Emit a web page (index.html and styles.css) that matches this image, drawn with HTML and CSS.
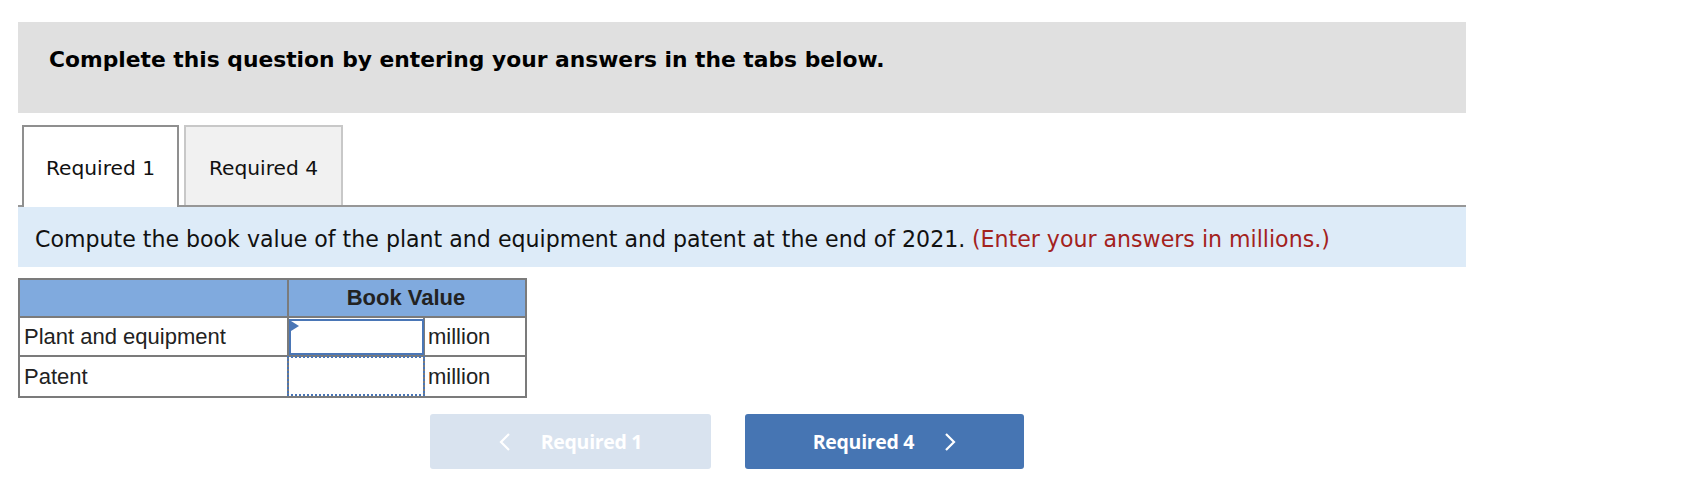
FILE: index.html
```html
<!DOCTYPE html>
<html>
<head>
<meta charset="utf-8">
<link rel="stylesheet" href="styles.css">
</head>
<body>
<div class="page">
  <div class="banner">Complete this question by entering your answers in the tabs below.</div>
  <div class="tabs">
    <div class="tab tab-active">Required 1</div>
    <div class="tab tab-idle">Required 4</div>
  </div>
  <div class="instruction">Compute the book value of the plant and equipment and patent at the end of 2021. <span class="note">(Enter your answers in millions.)</span></div>
  <table class="grid">
    <colgroup>
      <col class="w-label">
      <col class="w-input">
      <col class="w-unit">
    </colgroup>
    <thead>
      <tr>
        <th class="c-label"></th>
        <th class="c-head" colspan="2">Book Value</th>
      </tr>
    </thead>
    <tbody>
      <tr>
        <td class="c-label">Plant and equipment</td>
        <td class="c-input"><div class="field field-active"><span class="flag"></span></div></td>
        <td class="c-unit">million</td>
      </tr>
      <tr>
        <td class="c-label">Patent</td>
        <td class="c-input"><div class="field field-dotted"></div></td>
        <td class="c-unit">million</td>
      </tr>
    </tbody>
  </table>
  <div class="nav">
    <div class="btn btn-disabled">
      <svg class="chev" width="12" height="20" viewBox="0 0 12 20"><path d="M10 2 L2 10 L10 18" fill="none" stroke="#fff" stroke-width="2.2"/></svg>
      <span>Required 1</span>
    </div>
    <div class="btn btn-primary">
      <span>Required 4</span>
      <svg class="chev" width="12" height="20" viewBox="0 0 12 20"><path d="M2 2 L10 10 L2 18" fill="none" stroke="#fff" stroke-width="2.2"/></svg>
    </div>
  </div>
</div>
</body>
</html>
```

FILE: styles.css
```css
html, body {
  margin: 0;
  padding: 0;
  background: #ffffff;
}
.page {
  padding: 22px 0 0 18px;
  width: 1448px;
  font-family: "DejaVu Sans", Verdana, sans-serif;
}
.banner {
  box-sizing: border-box;
  height: 91px;
  background: #e0e0e0;
  padding: 25px 0 0 31px;
  font-weight: bold;
  font-size: 21.8px;
  color: #000;
}
.tabs {
  margin-top: 12px;
  display: flex;
  gap: 5px;
  padding-left: 4px;
  border-bottom: 2px solid #979797;
  height: 80px;
}
.tab {
  box-sizing: border-box;
  height: 82px;
  display: flex;
  align-items: center;
  justify-content: center;
  font-size: 20.2px;
  color: #111;
  padding-top: 2px;
}
.tab-active {
  width: 157px;
  background: #fff;
  border: 2px solid #8f8f8f;
  border-bottom: none;
  position: relative;
  z-index: 1;
}
.tab-idle {
  width: 159px;
  height: 80px;
  background: #f1f1f1;
  border: 2px solid #c8c8c8;
  border-bottom: none;
  padding-top: 4px;
}
.instruction {
  box-sizing: border-box;
  height: 60px;
  background: #ddebf8;
  display: flex;
  align-items: center;
  padding: 3px 0 0 17px;
  font-size: 22.1px;
  color: #111;
}
.note {
  color: #a3221d;
  margin-left: 0.3em;
}
.grid {
  margin-top: 11px;
  border-collapse: collapse;
  table-layout: fixed;
  width: 507px;
  font-family: "Liberation Sans", Arial, sans-serif;
  font-size: 22px;
  color: #222;
  border: 2px solid #7b7b7b;
}
.w-label { width: 269px; }
.w-input { width: 136px; }
.w-unit { width: 102px; }
.grid th, .grid td {
  border: 2px solid #7b7b7b;
  padding: 0;
  white-space: nowrap;
}
.grid thead tr {
  height: 38px;
  background: #80aade;
}
.grid tbody tr {
  height: 39px;
}
.c-label {
  padding-left: 4px !important;
  text-align: left;
}
.c-head {
  font-weight: bold;
  text-align: center;
  padding-right: 2px !important;
}
.c-input {
  position: relative;
}
.c-unit {
  padding-left: 3px !important;
}
.field {
  box-sizing: border-box;
  position: relative;
}
.field-active {
  border: 2px solid #4a76b6;
  height: 36px;
  width: 135px;
  margin: 1px 0 0 0;
}
.field-dotted {
  border: 2px dotted #4a76b6;
  margin: -1px 0 0 -2px;
  width: 138px;
  height: 40px;
}
.flag {
  position: absolute;
  left: 0;
  top: 0;
  width: 0;
  height: 0;
  border-top: 5px solid transparent;
  border-bottom: 5px solid transparent;
  border-left: 8px solid #4a76b6;
}
.nav {
  display: flex;
  gap: 34px;
  margin: 16px 0 0 412px;
}
.btn {
  box-sizing: border-box;
  height: 55px;
  border-radius: 3px;
  display: flex;
  align-items: center;
  justify-content: center;
  gap: 30px;
  font-family: "Open Sans", sans-serif;
  font-weight: bold;
  font-size: 19.5px;
  letter-spacing: -0.3px;
  color: #fff;
}
.btn-disabled {
  width: 281px;
  background: #d9e3ef;
}
.btn-primary {
  width: 279px;
  background: #4675b3;
}
.chev {
  display: block;
}
```
